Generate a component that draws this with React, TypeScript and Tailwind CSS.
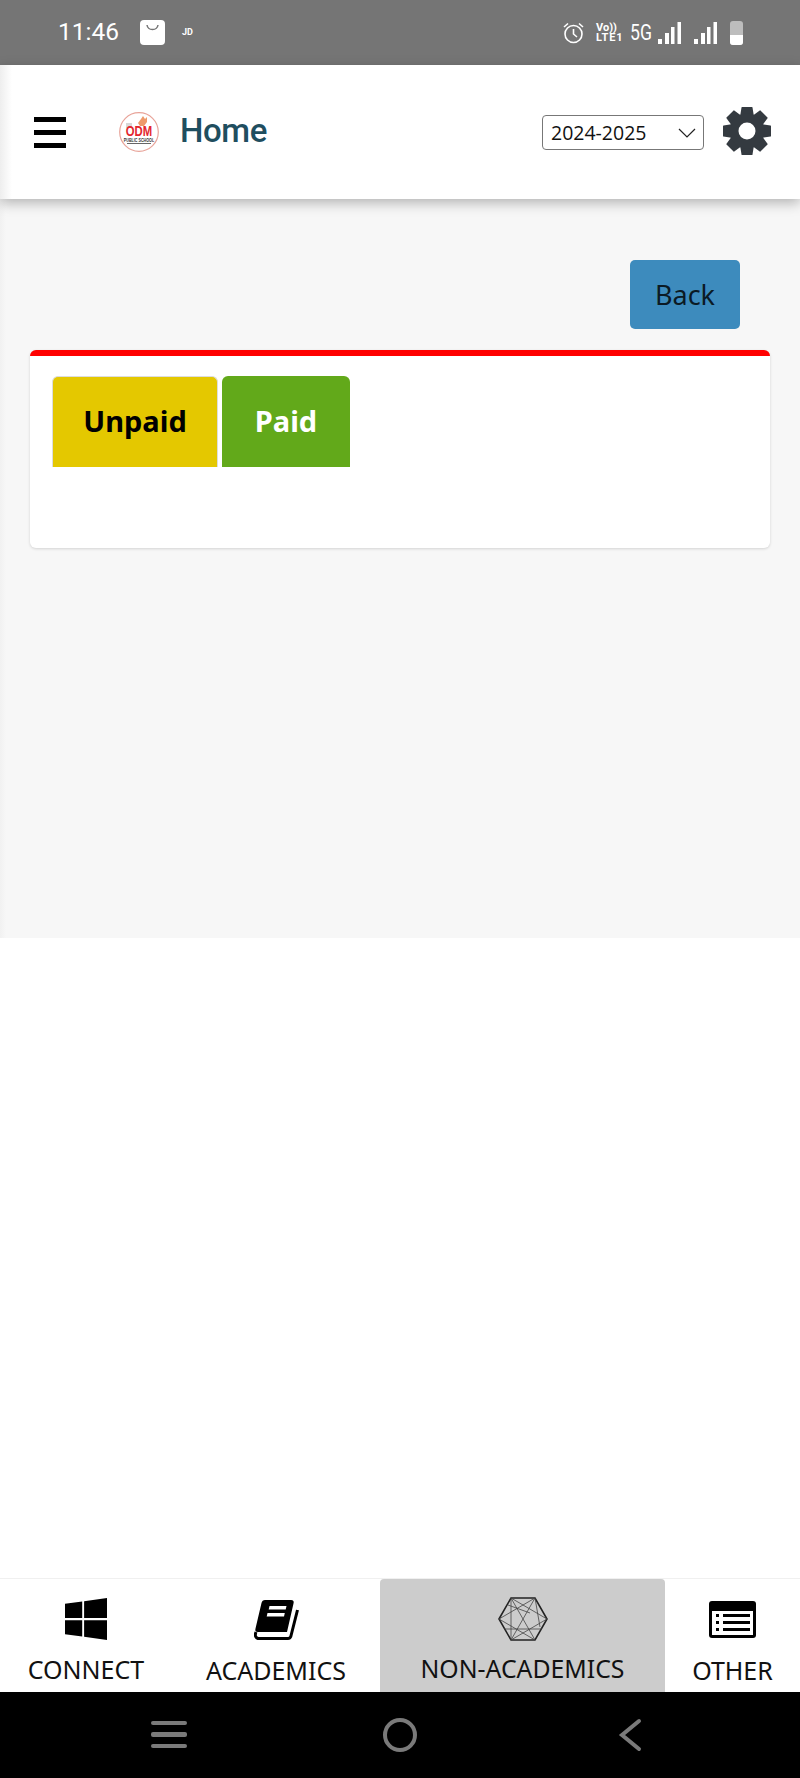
import { FaWindows } from "react-icons/fa";

function Bars() {
  return (
    <svg width="23" height="22" viewBox="0 0 23 22" fill="#fff">
      <rect x="0" y="17" width="4" height="5" />
      <rect x="7" y="11" width="4" height="11" />
      <rect x="13" y="5" width="3.5" height="17" />
      <rect x="19.5" y="0" width="3.5" height="22" />
    </svg>
  );
}

function Logo() {
  return (
    <svg width="42" height="42" viewBox="0 0 42 42">
      <circle cx="21" cy="21" r="19.3" fill="#fff" stroke="#e8a49a" strokeWidth="1.2" />
      <path d="M20 12 L23 8 L25 5 L27 8 L29 6 L29 11 L26 15 L22 15 Z" fill="#ee9a6b" />
      <rect x="8" y="12" width="6" height="5" fill="#d8d8d8" />
      <g transform="translate(21 25) scale(0.78 1)">
        <text x="0" y="0" textAnchor="middle" fontSize="14.5" fontWeight="700" fill="#e3262e" fontFamily="'Liberation Sans',sans-serif">ODM</text>
      </g>
      <g transform="translate(21 31) scale(0.68 1)">
        <text x="0" y="0" textAnchor="middle" fontSize="5.4" fontWeight="700" fill="#333" fontFamily="'Liberation Sans',sans-serif">PUBLIC SCHOOL</text>
      </g>
      <rect x="9" y="32" width="24" height="1" fill="#666" />
    </svg>
  );
}

function Gear() {
  const angles = [0, 45, 90, 135, 180, 225, 270, 315];
  return (
    <svg width="48" height="48" viewBox="0 0 48 48" fill="#343a40">
      {angles.map((a) => (
        <path key={a} d="M18.5 0.5 Q18.5 0 19 0 H29 Q29.5 0 29.5 0.5 L31 10 H17 Z" transform={`rotate(${a} 24 24)`} />
      ))}
      <path fillRule="evenodd" d="M24 6.5 A17.5 17.5 0 1 1 24 41.5 A17.5 17.5 0 1 1 24 6.5 Z M24 15.5 A8.5 8.5 0 1 0 24 32.5 A8.5 8.5 0 1 0 24 15.5 Z" />
    </svg>
  );
}

function Book() {
  return (
    <svg width="45" height="42" viewBox="0 0 45 42">
      <path d="M11 1 H37 Q40.5 1 39.5 4.5 L33 33 H4 Q0.5 33 1.5 29.5 L7.5 4 Q8.2 1 11 1 Z" fill="#000" />
      <path d="M2 33 Q0 38 4 39.5 H34 Q36 39.5 36.8 37.5 L43.5 11" fill="none" stroke="#000" strokeWidth="3" strokeLinejoin="round" />
      <path d="M15.5 7 H32.5 L31.7 10.5 H14.7 Z M13.5 14 H30.8 L30 17.5 H12.7 Z" fill="#fff" />
    </svg>
  );
}

function Hex() {
  return (
    <svg width="50" height="44" viewBox="0 0 50 44" fill="none" stroke="#222">
      <path d="M1 22 L13 1 L37 1 L49 22 L37 43 L13 43 Z" strokeWidth="1.6" />
      <path d="M13 1 L37 43 M37 1 L13 43 M1 22 L37 1 M13 1 L49 22 M1 22 L37 43 M13 43 L49 22 M6 32 L44 32 M13 1 L13 43 M37 1 L42 30 M10 8 L32 16" strokeWidth="0.8" stroke="#444" />
    </svg>
  );
}

function ListIcon() {
  return (
    <svg width="48" height="38" viewBox="0 0 48 38">
      <rect x="0" y="0" width="47" height="37" rx="3" fill="#000" />
      <rect x="3" y="10" width="41" height="24" fill="#fff" />
      <rect x="7" y="13" width="3" height="3" fill="#000" />
      <rect x="7" y="20" width="3" height="3" fill="#000" />
      <rect x="7" y="27" width="3" height="3" fill="#000" />
      <rect x="14" y="13" width="27" height="3" fill="#000" />
      <rect x="14" y="20" width="27" height="3" fill="#000" />
      <rect x="14" y="27" width="27" height="3" fill="#000" />
    </svg>
  );
}

export default function App() {
  return (
    <div className="flex h-[1778px] w-[800px] flex-col overflow-hidden bg-white font-['Noto_Sans','Open_Sans',sans-serif]">
      {/* Status bar */}
      <div className="flex h-[65px] shrink-0 items-center justify-between bg-[#757575] pl-[58px] pr-[57px] text-white">
        <div className="flex items-center">
          <span className="w-[61px] font-['Roboto',sans-serif] text-[24.5px] leading-none">11:46</span>
          <svg className="ml-[21px]" width="25" height="25" viewBox="0 0 25 25">
            <rect width="25" height="25" rx="4" fill="#fff" />
            <path d="M7 5 C8 11 17 11 18 5" fill="none" stroke="#757575" strokeWidth="1.5" />
          </svg>
          <span className="ml-[17px] font-['Roboto',sans-serif] text-[9px] font-bold leading-none">JD</span>
        </div>
        <div className="flex items-center">
          <svg width="21" height="22" viewBox="0 0 21 22" fill="none" stroke="#fff" strokeWidth="1.6">
            <circle cx="10.5" cy="12" r="8.5" />
            <path d="M10.5 7 V12 L14 15" />
            <path d="M1 5 L5 1.5 M20 5 L16 1.5" />
          </svg>
          <div className="ml-[12px] flex w-[26px] flex-col items-start font-['Roboto',sans-serif] text-[11px] font-bold leading-[10px]">
            <span>Vo))</span>
            <span className="tracking-[0.8px]">LTE1</span>
          </div>
          <span className="ml-[8px] inline-block w-[20px] origin-left scale-x-[0.8] font-['Roboto',sans-serif] text-[22px] leading-none">5G</span>
          <div className="ml-[8px]"><Bars /></div>
          <div className="ml-[13px]"><Bars /></div>
          <div className="relative ml-[13px] h-[24px] w-[13px] overflow-hidden rounded-[3px] bg-[#bdbdbd]">
            <div className="absolute bottom-0 left-0 h-[10px] w-full bg-white" />
          </div>
        </div>
      </div>

      {/* Header */}
      <div className="z-10 flex h-[134px] shrink-0 items-center bg-[linear-gradient(to_right,#eeeeee,#ffffff_12px)] pl-[34px] pr-[29px] shadow-[0_4px_12px_rgba(0,0,0,0.28)]">
        <div className="flex w-[32px] flex-col gap-[8px]">
          <div className="h-[5px] bg-black" />
          <div className="h-[5px] bg-black" />
          <div className="h-[5px] bg-black" />
        </div>
        <div className="ml-[52px]"><Logo /></div>
        <span className="ml-[20px] pb-[3px] font-['Roboto',sans-serif] text-[33px] font-medium leading-none tracking-[-0.4px] text-[#1f4e5f]">Home</span>
        <div className="ml-auto flex h-[35px] w-[162px] items-center justify-between rounded-[4px] border border-[#777] bg-white pl-[8px] pr-[7px] pt-[1px] text-[#111]">
          <span className="font-['Open_Sans',sans-serif] text-[19.5px] leading-none">2024-2025</span>
          <svg width="18" height="10" viewBox="0 0 18 10" fill="none" stroke="#222" strokeWidth="1.2">
            <path d="M1 1 L9 9 L17 1" />
          </svg>
        </div>
        <div className="ml-[19px] pb-[3px]"><Gear /></div>
      </div>

      {/* Main */}
      <div className="flex h-[739px] shrink-0 flex-col bg-[linear-gradient(to_right,#f1f1f1,#f7f7f7_6px)] px-[30px] pt-[61px]">
        <div className="flex justify-end pr-[30px]">
          <button className="flex h-[69px] w-[110px] items-center justify-center rounded-[5px] bg-[#3d8bbd] text-[27px] leading-none text-[#0b1a24]">
            Back
          </button>
        </div>
        <div className="mt-[21px] flex h-[198px] flex-col rounded-[6px] border-t-[6px] border-[#ff0000] bg-white pl-[22px] pt-[20px] shadow-[0_1px_3px_rgba(0,0,0,0.15)]">
          <div className="flex gap-[4px]">
            <div className="flex h-[91px] w-[166px] items-center justify-center rounded-t-[6px] border border-b-0 border-[#ddd] bg-[#e4c800] pb-[4px] text-[29px] font-bold leading-none text-black">
              Unpaid
            </div>
            <div className="flex h-[91px] w-[128px] items-center justify-center rounded-t-[6px] bg-[#62a91a] pb-[3px] text-[29px] font-bold leading-none text-white">
              Paid
            </div>
          </div>
        </div>
      </div>

      {/* Empty area */}
      <div className="min-h-0 flex-1 bg-white" />

      {/* Bottom nav */}
      <div className="flex h-[114px] shrink-0 border-t border-[#f0f0f0] bg-white text-[25px] leading-none text-[#111]">
        <div className="flex w-[172px] flex-col items-center pt-[19px]">
          <div className="flex h-[42px] items-center"><FaWindows size={48} className="text-black" /></div>
          <span className="mt-[17px]">CONNECT</span>
        </div>
        <div className="flex w-[208px] flex-col items-center pt-[20px]">
          <div className="flex h-[42px] items-center"><Book /></div>
          <span className="mt-[17px]">ACADEMICS</span>
        </div>
        <div className="flex w-[285px] flex-col items-center rounded-t-[4px] bg-[#cccccc] pt-[18px]">
          <div className="flex h-[44px] items-center"><Hex /></div>
          <span className="mt-[15px] text-[24.8px]">NON-ACADEMICS</span>
        </div>
        <div className="flex flex-1 flex-col items-center pt-[21px]">
          <div className="flex h-[40px] items-center"><ListIcon /></div>
          <span className="mt-[18px]">OTHER</span>
        </div>
      </div>

      {/* Android nav */}
      <div className="flex h-[86px] shrink-0 items-center bg-black pb-[1px] pl-[151px]">
        <div className="flex w-[36px] flex-col gap-[7px]">
          <div className="h-[4.5px] rounded-[2px] bg-[#7a7a7a]" />
          <div className="h-[4.5px] rounded-[2px] bg-[#7a7a7a]" />
          <div className="h-[4.5px] rounded-[2px] bg-[#7a7a7a]" />
        </div>
        <div className="ml-[196px] h-[34px] w-[34px] rounded-full border-[4px] border-[#7a7a7a]" />
        <svg className="ml-[201px]" width="24" height="34" viewBox="0 0 24 34" fill="none" stroke="#7a7a7a" strokeWidth="4" strokeLinecap="round">
          <path d="M21 3 L4 17 L21 31" />
        </svg>
      </div>
    </div>
  );
}
